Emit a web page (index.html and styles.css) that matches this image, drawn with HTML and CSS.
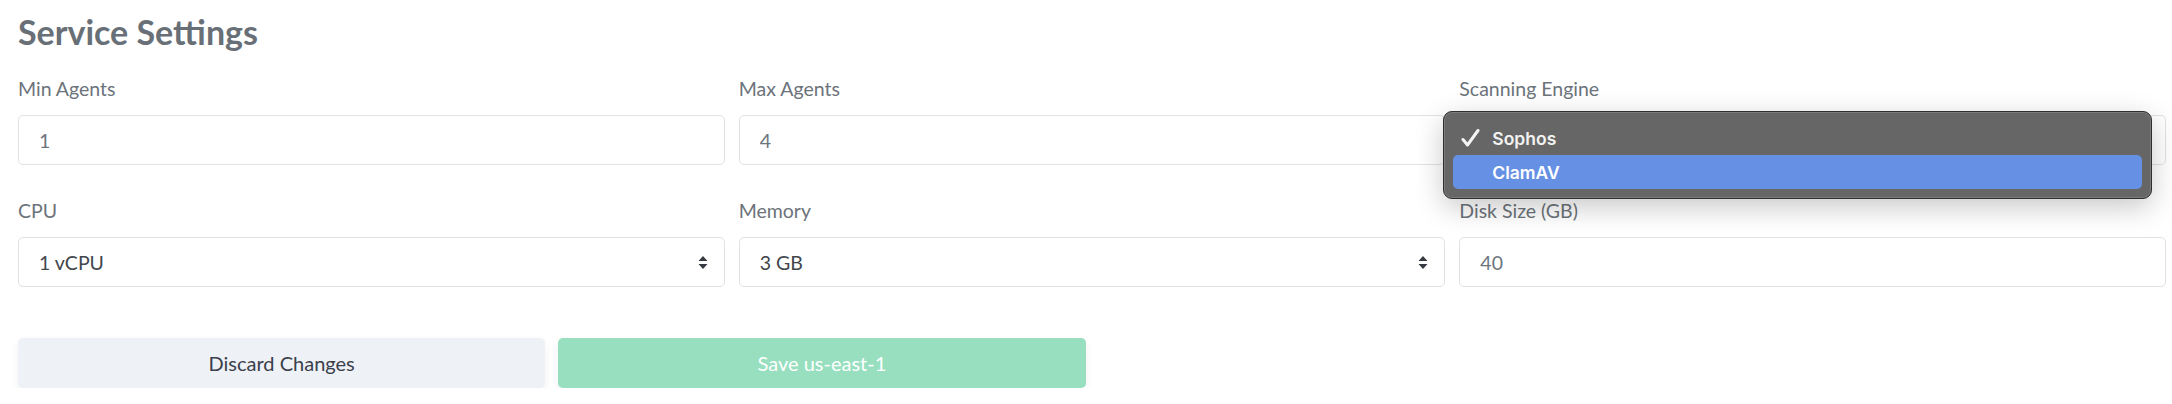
FILE: index.html
```html
<!DOCTYPE html>
<html>
<head>
    <title>Service Settings</title>
    <link rel="stylesheet" href="styles.css">
</head>
<body>
    <div class="settings">
        <h1>Service Settings</h1>

        <div class="field-grid">
            <div class="field">
                <label for="min-agents">Min Agents</label>
                <input class="control" id="min-agents" type="text" value="1">
            </div>
            <div class="field">
                <label for="max-agents">Max Agents</label>
                <input class="control" id="max-agents" type="text" value="4">
            </div>
            <div class="field">
                <label for="engine">Scanning Engine</label>
                <div class="select-wrap">
                    <select class="control select" id="engine">
                        <option>Sophos</option>
                        <option>ClamAV</option>
                    </select>
                    <!-- open native menu -->
                    <div class="menu">
                        <div class="menu-item">
                            <span class="check">
                                <svg width="19" height="18" viewBox="0 0 19 18">
                                    <path d="M2 10.5 L6.5 16 L17 1.5" fill="none" stroke="#f4f4f4" stroke-width="3" stroke-linecap="round" stroke-linejoin="round"/>
                                </svg>
                            </span>Sophos
                        </div>
                        <div class="menu-item active">
                            <span class="check"></span>ClamAV
                        </div>
                    </div>
                </div>
            </div>

            <div class="field">
                <label for="cpu">CPU</label>
                <select class="control select" id="cpu">
                    <option>1 vCPU</option>
                </select>
            </div>
            <div class="field">
                <label for="memory">Memory</label>
                <select class="control select" id="memory">
                    <option>3 GB</option>
                </select>
            </div>
            <div class="field">
                <label for="disk">Disk Size (GB)</label>
                <input class="control" id="disk" type="text" value="40">
            </div>
        </div>

        <div class="actions">
            <button class="btn btn-discard">Discard Changes</button>
            <button class="btn btn-save">Save us-east-1</button>
        </div>
    </div>
</body>
</html>
```

FILE: styles.css
```css
body {
    font-family: Lato, "Open Sans", sans-serif;
    background: #ffffff;
    margin: 0;
    padding: 12px 6px 0 18px;
}

h1 {
    color: #686f77;
    font-size: 34px;
    font-weight: 700;
    line-height: 40px;
    margin: 0 0 25px;
}

.field-grid {
    display: grid;
    grid-template-columns: repeat(3, 1fr);
    column-gap: 14px;
    row-gap: 34px;
}

.field {
    display: flex;
    flex-direction: column;
}

.field label {
    color: #6c737a;
    font-size: 19.5px;
    line-height: 24px;
    margin-bottom: 14px;
}

.control {
    box-sizing: border-box;
    width: 100%;
    height: 50px;
    padding: 0 20px;
    border: 1px solid #dfe2e6;
    border-radius: 5px;
    background: #ffffff;
    font-family: Lato, "Open Sans", sans-serif;
    font-size: 19.5px;
    color: #6c757d;
    outline: none;
}

.select {
    appearance: none;
    -webkit-appearance: none;
    color: #41464d;
    background-image: url("data:image/svg+xml;utf8,<svg xmlns='http://www.w3.org/2000/svg' width='10' height='13' viewBox='0 0 10 13'><path d='M5 0L9.5 5H0.5Z M5 13L0.5 8H9.5Z' fill='%23343a40'/></svg>");
    background-repeat: no-repeat;
    background-position: right 16px center;
    background-size: 10px 13px;
}

.select-wrap {
    position: relative;
}

.menu {
    position: absolute;
    left: -16px;
    top: -4px;
    width: 709px;
    height: 88px;
    box-sizing: border-box;
    padding: 9px 9px 0;
    background: #666666;
    border: 1px solid #2e2e2e;
    border-radius: 9px;
    box-shadow: inset 0 0 0 1px #7c7c7c, 0 8px 28px rgba(0, 0, 0, 0.22);
    font-family: Inter, Roboto, sans-serif;
    font-weight: 600;
    font-size: 17.5px;
    color: #f2f2f2;
}

.menu-item {
    display: flex;
    align-items: center;
    height: 34px;
    border-radius: 5px;
}

.menu-item.active {
    background: #6590e3;
    color: #ffffff;
}

.check {
    display: flex;
    align-items: center;
    width: 39px;
    padding-left: 8px;
    box-sizing: border-box;
}

.actions {
    display: grid;
    grid-template-columns: repeat(4, 1fr);
    column-gap: 13px;
    margin-top: 51px;
}

.btn {
    height: 50px;
    border: none;
    border-radius: 5px;
    font-family: Lato, "Open Sans", sans-serif;
    font-size: 20px;
    box-shadow: 0 3px 8px rgba(0, 0, 0, 0.06);
}

.btn-discard {
    background: #eef1f6;
    color: #3a3f4b;
}

.btn-save {
    background: #97dfbf;
    color: #ffffff;
}
```
